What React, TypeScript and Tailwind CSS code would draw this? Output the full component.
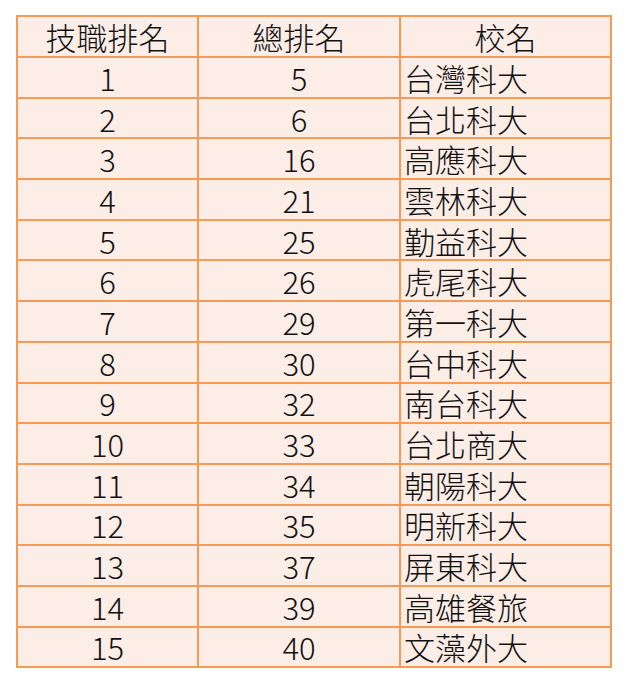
const rows: [number, number, string][] = [
  [1, 5, '台灣科大'],
  [2, 6, '台北科大'],
  [3, 16, '高應科大'],
  [4, 21, '雲林科大'],
  [5, 25, '勤益科大'],
  [6, 26, '虎尾科大'],
  [7, 29, '第一科大'],
  [8, 30, '台中科大'],
  [9, 32, '南台科大'],
  [10, 33, '台北商大'],
  [11, 34, '朝陽科大'],
  [12, 35, '明新科大'],
  [13, 37, '屏東科大'],
  [14, 39, '高雄餐旅'],
  [15, 40, '文藻外大'],
]

const cell = 'border-2 border-[#f79a55] p-0 leading-none'

export default function App() {
  return (
    <div className="w-[630px] h-[691px] bg-white pt-[15px] pl-[16px]" style={{ fontFamily: '"Noto Sans CJK TC", "Noto Sans", sans-serif' }}>
      <table className="border-collapse bg-[#fdede7] text-[31px] font-light text-[#111]">
        <colgroup>
          <col className="w-[181px]" />
          <col className="w-[202px]" />
          <col className="w-[211px]" />
        </colgroup>
        <thead>
          <tr className="h-[41px]">
            <th className={`${cell} font-light text-center`}>技職排名</th>
            <th className={`${cell} font-light text-center`}>總排名</th>
            <th className={`${cell} font-light text-center`}>校名</th>
          </tr>
        </thead>
        <tbody>
          {rows.map(([a, b, name]) => (
            <tr key={a} className="h-[40.7px]">
              <td className={`${cell} text-center`}>{a}</td>
              <td className={`${cell} text-center`}>{b}</td>
              <td className={`${cell} pl-[3px] text-left`}>{name}</td>
            </tr>
          ))}
        </tbody>
      </table>
    </div>
  )
}
